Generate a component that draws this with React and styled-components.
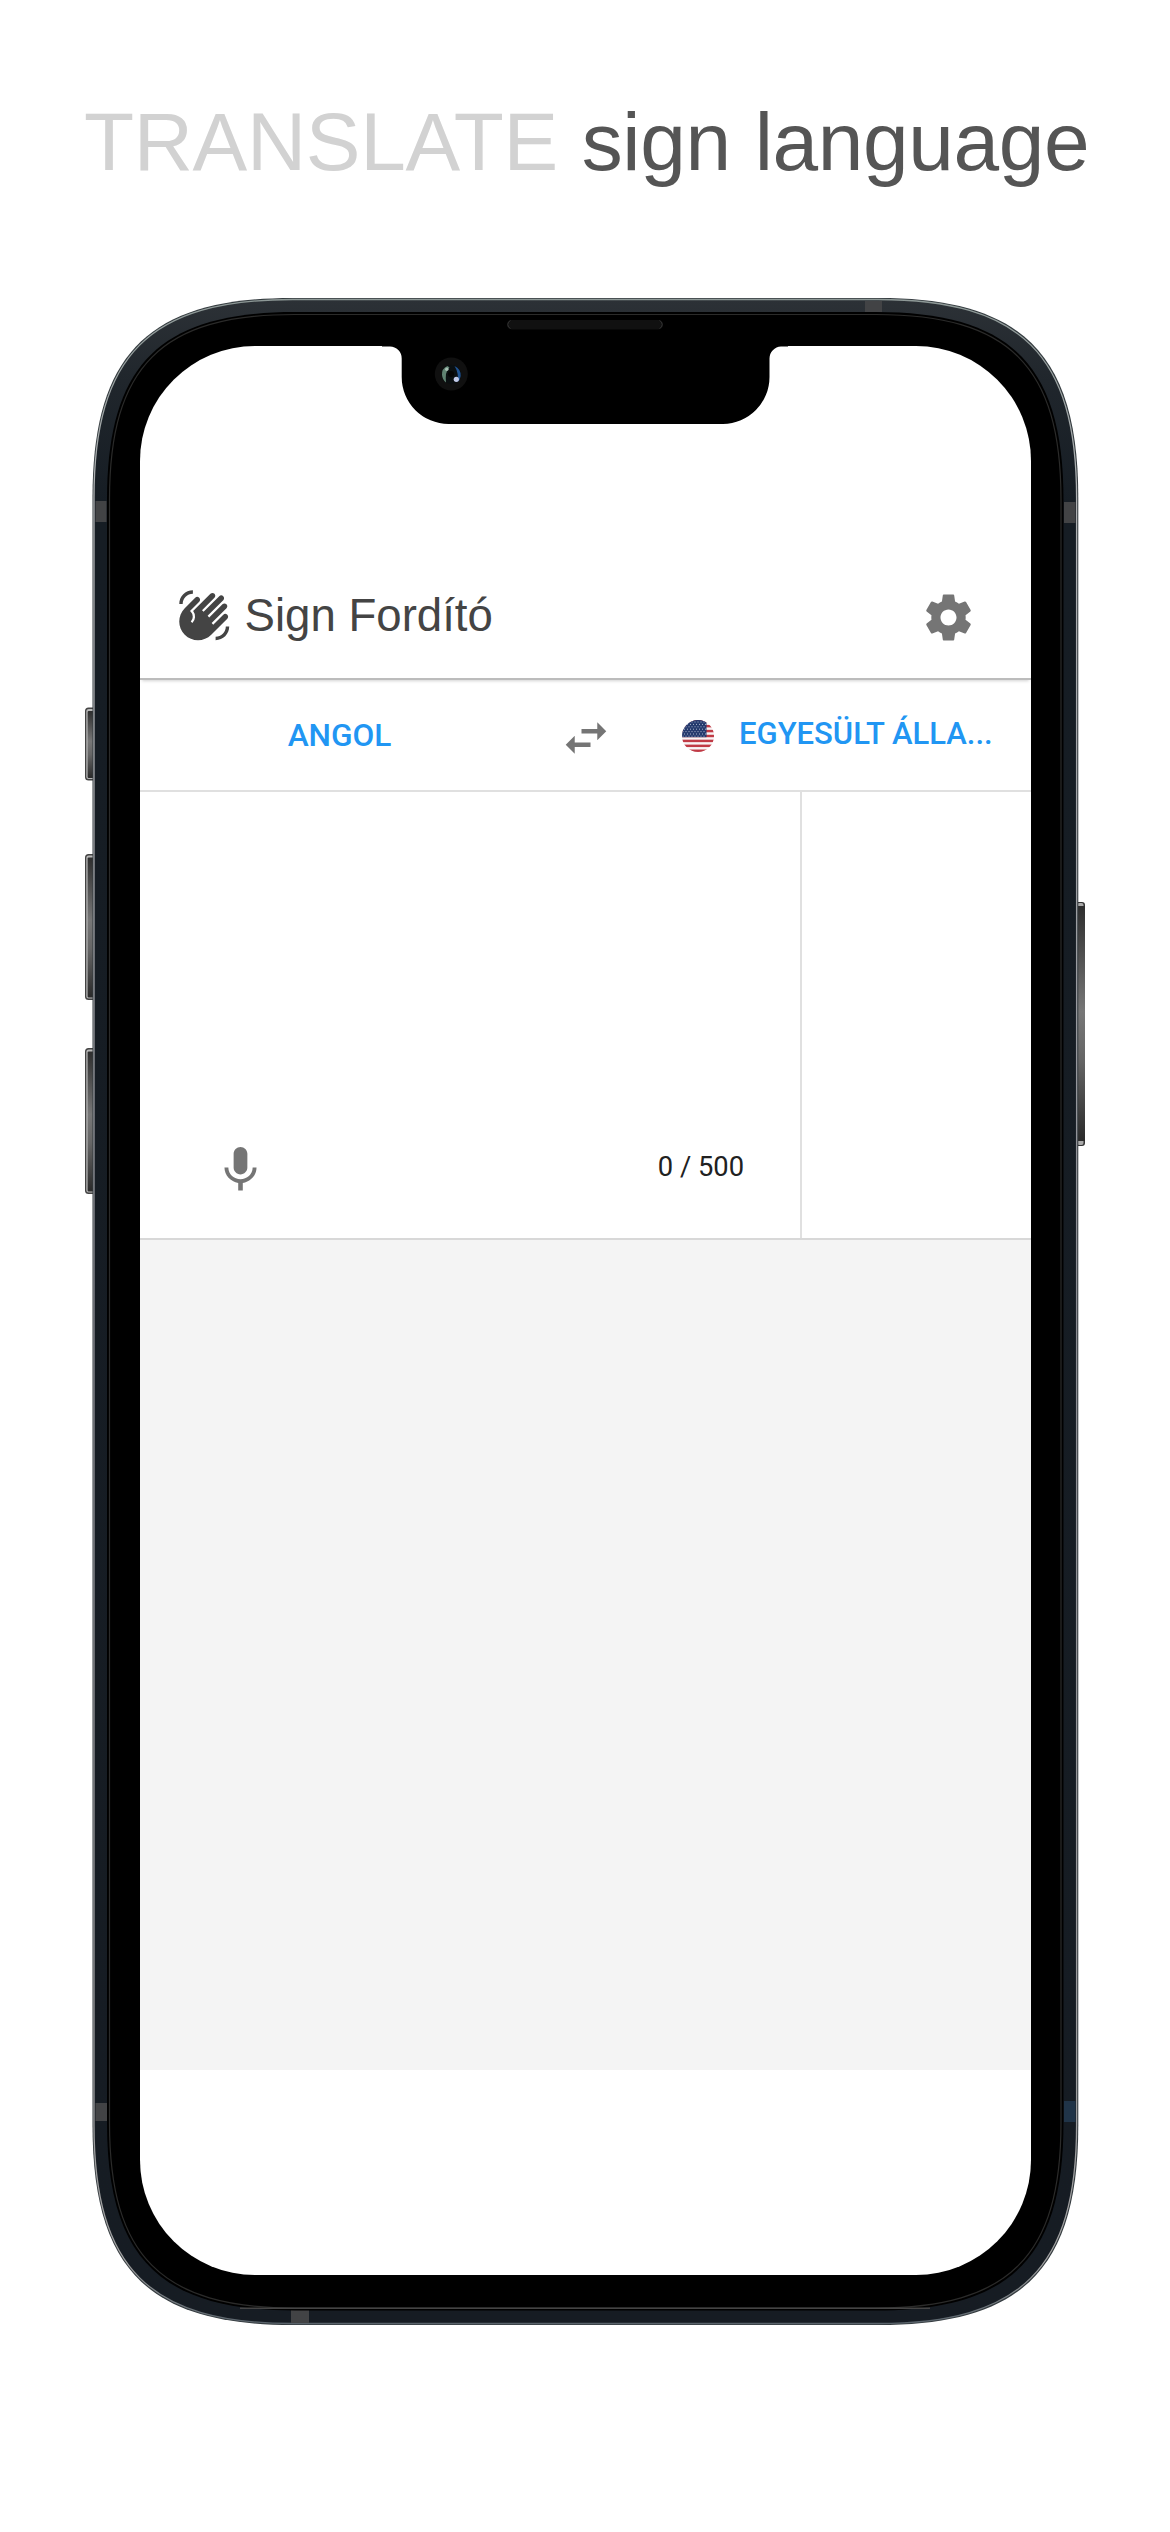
import React from "react";
import styled, { createGlobalStyle } from "styled-components";
import { MdWavingHand } from "react-icons/md";

const Global = createGlobalStyle`
  html, body { margin: 0; padding: 0; background: #fff; }
  *, *::before, *::after { box-sizing: border-box; }
`;

const Page = styled.main`
  width: 1170px;
  height: 2532px;
  overflow: hidden;
  background: #fff;
  display: flex;
  flex-direction: column;
  align-items: center;
  font-family: "Liberation Sans", Arial, sans-serif;
`;

const Headline = styled.h1`
  margin: 0;
  height: 298px;
  padding-top: 95px;
  width: 100%;
  padding-left: 84px;
  font-size: 82px;
  line-height: 94px;
  font-weight: 400;
  letter-spacing: -0.35px;
  word-spacing: 1.5px;
  white-space: nowrap;
  color: #555;
`;

const Faded = styled.span`
  color: #d2d2d2;
`;

const Device = styled.section`
  position: relative;
  width: 1000px;
  height: 2028px;
  padding: 48px 54px 51px 55px;
  display: flex;
`;

const Frame = styled.svg`
  position: absolute;
  inset: 0;
  width: 1000px;
  height: 2028px;
`;

const Screen = styled.div`
  position: relative;
  flex: 1;
  display: flex;
  flex-direction: column;
  overflow: hidden;
  border-radius: 115px;
  background: #fff;
`;

const Notch = styled.svg`
  position: absolute;
  left: 242px;
  top: 0;
  width: 406px;
  height: 80px;
`;

const StatusSpace = styled.div`
  height: 210px;
`;

const AppBar = styled.header`
  height: 124px;
  padding: 0 55px 0 37px;
  display: flex;
  align-items: center;
  border-bottom: 2px solid #bcbcbc;
  box-shadow: 0 3px 3px -2px rgba(0, 0, 0, 0.18);
`;

const Brand = styled.div`
  display: flex;
  align-items: center;
  gap: 13px;
  margin-top: -3px;
  color: #444;
`;

const BrandName = styled.span`
  font-size: 45.6px;
  line-height: 60px;
`;

const IconButton = styled.button`
  border: 0;
  padding: 0;
  background: none;
  display: flex;
  color: #757575;
  margin-left: ${(p) => p.$push || "0"};
  margin-top: ${(p) => p.$drop || "0"};
`;

const LanguageBar = styled.nav`
  height: 112px;
  display: grid;
  grid-template-columns: 399px 94px 1fr;
  align-items: center;
  border-bottom: 2px solid #e0e0e0;
  font-family: Roboto, sans-serif;
`;

const Language = styled.div`
  display: flex;
  align-items: center;
  justify-content: ${(p) => p.$align || "center"};
  padding: ${(p) => p.$pad || "0"};
  gap: 25px;
  color: #2196f3;
  font-size: ${(p) => p.$size || "31px"};
  font-weight: 500;
  line-height: 40px;
`;

const LanguageName = styled.span`
  white-space: nowrap;
  margin-top: ${(p) => p.$shift || "0"};
`;

const Center = styled.div`
  display: flex;
  justify-content: center;
`;

const Panels = styled.div`
  height: 448px;
  display: flex;
  border-bottom: 2px solid #d8d8d8;
`;

const InputPanel = styled.div`
  width: 662px;
  border-right: 2px solid #e0e0e0;
  padding: 0 56px 43px 73px;
  display: flex;
  align-items: flex-end;
  justify-content: space-between;
`;

const Counter = styled.span`
  font-family: Roboto, sans-serif;
  font-size: 27.3px;
  line-height: 32px;
  margin-bottom: 12px;
  color: #212121;
`;

const Results = styled.div`
  height: 830px;
  background: #f4f4f4;
`;

const shell = (l, t, r, b, R, k = 0.72) => {
  const c = R * (1 - k);
  return `M${l} ${t + R}C${l} ${t + c} ${l + c} ${t} ${l + R} ${t}H${r - R}C${r - c} ${t} ${r} ${t + c} ${r} ${t + R}V${b - R}C${r} ${b - c} ${r - c} ${b} ${r - R} ${b}H${l + R}C${l + c} ${b} ${l} ${b - c} ${l} ${b - R}Z`;
};

const leftKeys = [
  [707.5, 73],
  [854, 146],
  [1048, 146],
];

function PhoneFrame() {
  return (
    <Frame viewBox="85 298 1000 2028" aria-hidden="true">
      <defs>
        <linearGradient id="key" x1="0" y1="0" x2="0" y2="1">
          <stop offset="0" stopColor="#2e2e2e" />
          <stop offset="0.45" stopColor="#777" />
          <stop offset="0.65" stopColor="#666" />
          <stop offset="1" stopColor="#2a2a2a" />
        </linearGradient>
        <linearGradient id="body" x1="0" y1="0" x2="0" y2="1">
          <stop offset="0" stopColor="#2c3136" />
          <stop offset="0.04" stopColor="#20262c" />
          <stop offset="0.1" stopColor="#161d24" />
          <stop offset="1" stopColor="#161c23" />
        </linearGradient>
        <linearGradient id="edge" x1="0" y1="0" x2="0" y2="1">
          <stop offset="0" stopColor="#8d9896" />
          <stop offset="0.1" stopColor="#b0b2b4" />
          <stop offset="0.5" stopColor="#8a8b92" />
          <stop offset="0.97" stopColor="#a0a0a0" />
          <stop offset="1" stopColor="#59636b" />
        </linearGradient>
      </defs>
      {leftKeys.map(([y, h]) => (
        <g key={y}>
          <rect x="85" y={y} width="14" height={h} rx="3.5" fill="#444" />
          <rect x="86.3" y={y + 1.5} width="12" height={h - 3} rx="2.5" fill="#b8b8b8" />
          <rect x="87.6" y={y + 3.5} width="6" height={h - 6} rx="1" fill="url(#key)" />
        </g>
      ))}
      <rect x="1072" y="902" width="13" height="244" rx="3" fill="#333" />
      <rect x="1077" y="903" width="6.5" height="242" rx="2" fill="#aaa" />
      <rect x="1077" y="906" width="8" height="235" fill="url(#key)" />
      <path d={shell(92.5, 298, 1078.3, 2325, 200)} fill="#333a3e" />
      <path d={shell(94, 299.5, 1076.6, 2323.5, 198.5)} fill="url(#body)" stroke="url(#edge)" strokeWidth="1.3" />
      <g fill="#424345">
        <rect x="95.5" y="501" width="11" height="21" />
        <rect x="1064" y="502" width="11.5" height="21" />
        <rect x="95.5" y="2103" width="12" height="18" />
        <rect x="865" y="301" width="17" height="11" />
        <rect x="291" y="2310" width="18" height="13" />
        <rect x="1064" y="2101" width="11.5" height="21" fill="#203448" />
      </g>
      <path d={shell(107, 312, 1063.5, 2310.5, 188)} fill="#000" />
      <path d={shell(109.5, 314.5, 1061, 2308, 185)} fill="none" stroke="#2b2b2a" strokeWidth="1.2" />
      <path d="M240 2308.2H930" stroke="#444" strokeWidth="1.5" />
      <rect x="507" y="320" width="156" height="9.5" rx="4.7" fill="#111" />
      <path d="M510.500 320.500a4.300 4.300 0 0 0 0 8M659.500 320.500a4.300 4.300 0 0 1 0 8" fill="none" stroke="#333" />
    </Frame>
  );
}

function CameraNotch() {
  return (
    <Notch viewBox="382 346 406 80" aria-hidden="true">
      <path d="M382 340V346.500H390A12 12 0 0 1 401.700 358.500V377A47 47 0 0 0 448.500 424H723A47 47 0 0 0 769.500 377V358.500A12 12 0 0 1 781 346.500H788V340Z" fill="#000" />
      <circle cx="451.300" cy="374" r="16.500" fill="#101010" />
      <circle cx="451.300" cy="374.500" r="9.700" fill="#0a0f11" />
      <path d="M447.500 366Q441.500 368.500 442 375Q442.500 380 446 382.500Q445.500 378 446 374Q446.500 370 449.500 367.500Z" fill="#5f8271" />
      <path d="M454.500 366Q461 369 460.700 376Q460.300 380 457.500 382Q459 373 454.500 366Z" fill="#1f5291" />
      <circle cx="446.800" cy="369.200" r="1.700" fill="#a8c0b4" />
      <circle cx="456.300" cy="379.300" r="2.600" fill="#c2cae8" />
      <circle cx="451" cy="374" r="3" fill="#050505" />
    </Notch>
  );
}

const GearIcon = () => (
  <svg width="55" height="55" viewBox="0 0 24 24" fill="currentColor">
    <path d="M19.430 12.980c.04-.32.07-.64.07-.98s-.03-.66-.07-.98l2.110-1.650c.19-.15.24-.42.12-.64l-2-3.460c-.12-.22-.39-.3-.61-.22l-2.490 1c-.52-.4-1.080-.73-1.690-.98l-.38-2.650C14.460 2.180 14.250 2 14 2h-4c-.25 0-.46.18-.49.42l-.38 2.650c-.61.25-1.170.59-1.690.98l-2.490-1c-.23-.09-.49 0-.61.22l-2 3.460c-.13.22-.07.49.12.64l2.110 1.650c-.04.32-.07.65-.07.98s.03.66.07.98l-2.110 1.650c-.19.15-.24.42-.12.64l2 3.460c.12.22.39.3.61.22l2.490-1c.52.4 1.080.73 1.690.98l.38 2.650c.03.24.24.42.49.42h4c.25 0 .46-.18.49-.42l.38-2.650c.61-.25 1.170-.59 1.690-.98l2.490 1c.23.09.49 0 .61-.22l2-3.460c.12-.22.07-.49-.12-.64l-2.110-1.650zM12 15.500c-1.930 0-3.500-1.570-3.500-3.500s1.570-3.500 3.500-3.500 3.500 1.570 3.500 3.500-1.570 3.500-3.500 3.500z" />
  </svg>
);

const SwapIcon = () => (
  <svg width="54" height="54" viewBox="0 0 24 24" fill="currentColor">
    <path d="M6.990 11L3 15l3.990 4v-3H14v-2H6.990v-3zM21 9l-3.990-4v3H10v2h7.010v3L21 9z" />
  </svg>
);

const MicIcon = () => (
  <svg width="55" height="55" viewBox="0 0 24 24" fill="currentColor">
    <path d="M12 15c1.660 0 2.990-1.340 2.990-3L15 6c0-1.660-1.340-3-3-3S9 4.340 9 6v6c0 1.660 1.340 3 3 3zm5.300-3c0 3-2.540 5.100-5.300 5.100S6.700 15 6.700 12H5c0 3.420 2.720 6.230 6 6.720V22h2v-3.280c3.280-.48 6-3.300 6-6.720h-1.700z" />
  </svg>
);

const stripes = [0, 2, 4, 6, 8, 10, 12];
const starRows = [2, 4.4, 6.8, 9.2, 11.6, 14, 16.2];

function UsFlag() {
  return (
    <svg width="32" height="32" viewBox="0 0 32 32">
      <clipPath id="disc">
        <circle cx="16" cy="16" r="16" />
      </clipPath>
      <g clipPath="url(#disc)">
        <rect width="32" height="32" fill="#f8f4f5" />
        {stripes.map((n) => (
          <rect key={n} y={n * 2.46} width="32" height="2.46" fill="#c03a45" />
        ))}
        <rect width="24.500" height="17.200" fill="#253a6e" />
        {starRows.map((y, i) => (
          <line key={y} x1={i % 2 ? 2 : 0.5} x2="24" y1={y} y2={y} stroke="#aab3ca" strokeWidth="1" strokeDasharray="1 2" />
        ))}
      </g>
    </svg>
  );
}

export default function App() {
  return (
    <Page>
      <Global />
      <Headline>
        <Faded>TRANSLATE</Faded> sign language
      </Headline>
      <Device>
        <PhoneFrame />
        <Screen>
          <CameraNotch />
          <StatusSpace />
          <AppBar>
            <Brand>
              <MdWavingHand size={54.5} />
              <BrandName>Sign Fordító</BrandName>
            </Brand>
            <IconButton $push="auto" aria-label="Settings">
              <GearIcon />
            </IconButton>
          </AppBar>
          <LanguageBar>
            <Language $size="31.6px">
              <LanguageName $shift="2px">ANGOL</LanguageName>
            </Language>
            <Center>
              <IconButton $drop="6px" aria-label="Swap">
                <SwapIcon />
              </IconButton>
            </Center>
            <Language $align="flex-start" $pad="1px 0 0 49px">
              <UsFlag />
              <LanguageName $shift="-4px">EGYESÜLT ÁLLA...</LanguageName>
            </Language>
          </LanguageBar>
          <Panels>
            <InputPanel>
              <IconButton aria-label="Voice input">
                <MicIcon />
              </IconButton>
              <Counter>0 / 500</Counter>
            </InputPanel>
          </Panels>
          <Results />
        </Screen>
      </Device>
    </Page>
  );
}
